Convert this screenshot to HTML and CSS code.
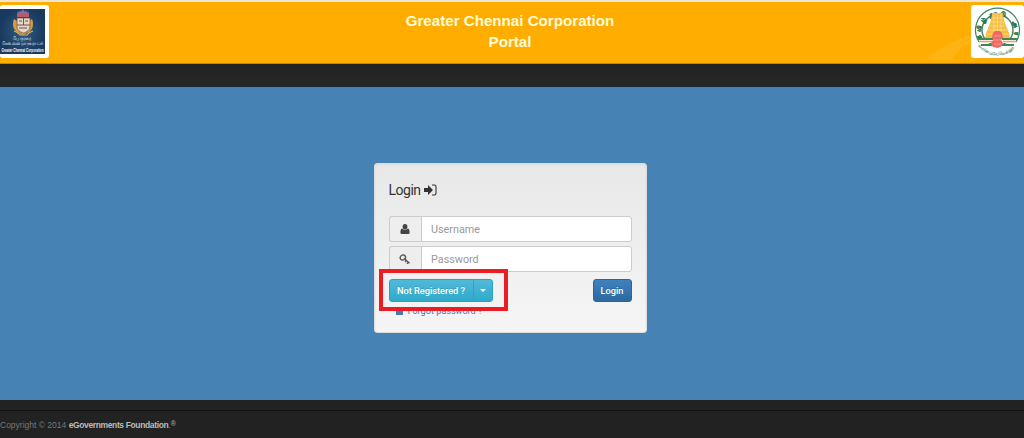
FILE: index.html
```html
<!DOCTYPE html>
<html lang="en">
<head>
  <meta charset="UTF-8" />
  <meta name="viewport" content="width=device-width, initial-scale=1.0"/>
  <title>Greater Chennai Corporation Portal</title>
  <link rel="stylesheet" href="styles.css">
</head>
<body>
  <header class="header">
    <div class="logo logo-left">
      <svg width="45" height="45" viewBox="0 0 45 45">
        <defs>
          <radialGradient id="navy"><stop offset="0" stop-color="#315c82"/><stop offset="1" stop-color="#193a5e"/></radialGradient>
        </defs>
        <rect width="45" height="45" fill="url(#navy)"/>
        <path d="M17 5l1-3 1 2 1-3 1 2 2-3 2 3 1-2 1 3 1-2 1 3z" fill="#8d6ba5"/>
        <path d="M17 5h12v3H17z" fill="#b55b67"/>
        <path d="M14 10c-2 5-1 10 3 13l6 3 6-3c4-3 5-8 3-13l-3 2H17z" fill="#d79c43"/>
        <path d="M17 9h13v8c0 4-3 6-6.500 7-4-1-6.500-3-6.500-7z" fill="#e5d6ca" stroke="#6e4f43" stroke-width=".7"/>
        <path d="M17 16h13M23.500 9v7M19 12h3M25 12h3M19 19h8" stroke="#76534d" stroke-width="1"/>
        <path d="M14 22q4 1 6 4h7q2-3 6-4" fill="none" stroke="#e3b34f" stroke-width="1.200"/>
        <text x="22" y="30.500" class="logo-tamil" textLength="18" lengthAdjust="spacingAndGlyphs">பெருநகர</text>
        <text x="22.500" y="35.500" class="logo-tamil" textLength="42" lengthAdjust="spacingAndGlyphs">சென்னை மாநகராட்சி</text>
        <text x="22.500" y="42.500" class="logo-name" textLength="42" lengthAdjust="spacingAndGlyphs">Greater Chennai Corporation</text>
      </svg>
    </div>
    <h1 class="title">Greater Chennai Corporation<br>Portal</h1>
    <svg class="swirl" width="80" height="40" viewBox="0 0 80 40">
      <path d="M2 36Q34 10 76 5Q30 18 15 35Q35 15 70 12Q34 21 28 38z" fill="#ffc13b"/>
    </svg>
    <div class="logo logo-right">
      <svg width="47" height="49" viewBox="0 0 47 49">
        <defs>
          <path id="ring-top" d="M7 31A17.500 17.500 0 1 1 40 31"/>
          <path id="ring-bottom" d="M2 35Q11 47 23.500 47T45 35"/>
        </defs>
        <path d="M5 34A22 22 0 1 1 42 34" fill="none" stroke="#3d855a" stroke-width="1.200"/>
        <ellipse cx="23.500" cy="22" rx="15.500" ry="15.200" fill="#fff" stroke="#3d855a" stroke-width="1.400"/>
        <text class="ring-text"><textPath href="#ring-top" textLength="71">தமிழ்நாடு அரசு</textPath></text>
        <path d="M18 5h11l1 7 2 6 3 7 1 6H11l1-6 3-7 2-6z" fill="#f6bd42"/>
        <path d="M18 10h11M17 14h13M16 18h15M14 22h19M13 26h21M20 6v23M23.500 6v23M27 6v23" stroke="#fae39b" stroke-width=".7"/>
        <path d="M5 31h14v4H5zM28 31h14v4H28z" fill="#fff"/>
        <path d="M4 30h15v2H4zM28 30h15v2H28zM7 36h12v2H7zM28 36h12v2H28z" fill="#3b895a"/>
        <path d="M5 33.500h13M29 33.500h13" stroke="#f39a55" stroke-width="1.500"/>
        <path d="M18 29l1-4 2-2h5l2 2 1 4-2 3 2 3-1 3-4 2-5-1-2-4 2-3z" fill="#ed6b62"/>
        <path d="M20 28h7M19 32h9M20 36h7" stroke="#f8a394" stroke-width=".8"/>
        <text class="motto"><textPath href="#ring-bottom" startOffset="4">வாய்மையே வெல்லும்</textPath></text>
      </svg>
    </div>
  </header>
  <div class="navbar"></div>

  <main class="content">
    <form class="login-panel">
      <h2 class="login-title">Login
        <svg width="13" height="12" viewBox="0 0 13 12">
          <path d="M0 4h4V1l5 5-5 5V8H0z" fill="#333"/>
          <path d="M8 1h2.500Q12 1 12 2.500v7Q12 11 10.500 11H8" fill="none" stroke="#333" stroke-width="1.100"/>
        </svg>
      </h2>
      <div class="input-group">
        <span class="addon">
          <svg width="10" height="10" viewBox="0 0 10 10" fill="#444"><ellipse cx="5" cy="2.700" rx="2.400" ry="2.700"/><path d="M2 4.500Q5 7 8 4.500Q9.600 5 9.600 8.500Q9.600 10 8.500 10h-7Q.4 10 .4 8.500Q.4 5 2 4.500z"/></svg>
        </span>
        <input class="field" type="text" placeholder="Username">
      </div>
      <div class="input-group">
        <span class="addon">
          <svg width="12" height="11" viewBox="0 0 12 11" fill="none" stroke="#555" stroke-width="1.400"><ellipse cx="3.800" cy="3.500" rx="2.800" ry="2.400" transform="rotate(-35 3.800 3.500)"/><path d="M5.500 4.800l5 4.500M7.300 6.500L6 8M9.300 8L8 9.800"/></svg>
        </span>
        <input class="field" type="password" placeholder="Password">
      </div>
      <div class="actions">
        <div class="btn-group">
          <button type="button" class="btn btn-info">Not Registered ?</button>
          <button type="button" class="btn btn-info btn-toggle" aria-label="More"><span class="caret"></span></button>
          <span class="highlight"></span>
        </div>
        <button type="button" class="btn btn-primary">Login</button>
      </div>
      <a class="forgot" href="#">
        <svg width="7" height="8" viewBox="0 0 7 8"><path d="M1.500 4V2.500a2 2 0 0 1 4 0V4" fill="none" stroke="#4579bd"/><path d="M0 3.500h7V8H0z" fill="#4579bd"/></svg>
        <span>Forgot password ?</span>
      </a>
    </form>
  </main>

  <footer class="footer">
    <div class="copyright">Copyright © 2014 <b>eGovernments Foundation</b>.<sup>®</sup></div>
  </footer>
</body>
</html>
```
FILE: styles.css
```css
* {
  box-sizing: border-box;
}
body {
  margin: 0;
  height: 438px;
  overflow: hidden;
  background-color: #222;
  font-family: "Liberation Sans", Arial, sans-serif;
}
.header {
  position: relative;
  display: flex;
  justify-content: space-between;
  height: 64px;
  padding-top: 4px;
  background-color: #ffad00;
  border-top: 2px solid #eee5d2;
  border-bottom: 1px solid #bd8410;
}
.logo {
  height: 53px;
  background-color: #fff;
  border-radius: 3px;
}
.logo svg {
  display: block;
  overflow: visible;
}
.logo-left {
  width: 49px;
  padding: 4px 4px 4px 0;
  margin-top: -1px;
}
.logo-right {
  width: 53px;
  margin-top: -1px;
  padding: 3px;
  z-index: 1;
}
.logo-tamil {
  font-size: 5px;
  fill: #f0f6fa;
  text-anchor: middle;
}
.logo-name {
  font-size: 4.5px;
  font-weight: bold;
  fill: #fff;
  text-anchor: middle;
}
.ring-text {
  font-size: 6px;
  font-weight: bold;
  letter-spacing: 1.5px;
  fill: #2b7449;
  stroke: #2b7449;
  stroke-width: 0.4px;
}
.motto {
  font-size: 4px;
  font-weight: bold;
  fill: #4d8b66;
}
.swirl {
  position: absolute;
  right: 20px;
  bottom: 0;
  opacity: 0.35;
}
.title {
  margin: 4px 0 0;
  color: #fffbd8;
  font-size: 15.15px;
  line-height: 21px;
  text-align: center;
}
.navbar {
  height: 23px;
  background: linear-gradient(#222, #282828);
  border-bottom: 1px solid #1b2730;
}
.content {
  height: 313px;
  padding-top: 76px;
  background-color: #4682b4;
}
.login-panel {
  width: 273px;
  height: 170px;
  margin-left: 373.5px;
  padding: 16px 15px 0;
  background: linear-gradient(#e8e8e8, #f5f5f5);
  border: 1px solid #dcdcdc;
  border-radius: 3px;
  box-shadow: inset 0 1px 3px rgba(0, 0, 0, 0.05);
}
.login-title {
  display: flex;
  align-items: center;
  gap: 3px;
  height: 20px;
  margin: 0 0 16px -1px;
  color: #333;
  font-family: Roboto, sans-serif;
  font-size: 14px;
  font-weight: 400;
  letter-spacing: -0.5px;
}
.input-group {
  display: flex;
  width: 243px;
  height: 26px;
  margin: 0 0 4px -1px;
}
.input-group + .input-group {
  margin-bottom: 7px;
}
.addon {
  display: flex;
  align-items: center;
  justify-content: center;
  width: 32.5px;
  background-color: #eee;
  border: 1px solid #ccc;
  border-right: 0;
  border-radius: 3px 0 0 3px;
}
.field {
  flex: 1;
  min-width: 0;
  padding: 0 9px;
  background-color: #fff;
  border: 1px solid #ccc;
  border-radius: 0 3px 3px 0;
  font-family: Roboto, sans-serif;
  font-size: 10.8px;
}
.field::placeholder {
  color: #999;
}
.actions {
  display: flex;
  justify-content: space-between;
  width: 243px;
  margin-left: -1px;
}
.btn-group {
  position: relative;
  display: flex;
}
.btn {
  height: 23px;
  padding: 0 8px;
  color: #fff;
  border: 1px solid #28a4c9;
  border-radius: 3px;
  font-family: Roboto, sans-serif;
  font-size: 9.2px;
  font-weight: 500;
  text-shadow: 0 -1px 0 rgba(0, 0, 0, 0.15);
  white-space: nowrap;
}
.btn-info {
  width: 85px;
  padding: 0;
  background: linear-gradient(#51b9d8, #2faacb);
  border-radius: 3px 0 0 3px;
}
.btn-toggle {
  display: flex;
  align-items: center;
  justify-content: center;
  width: 20px;
  margin-left: -1px;
  border-radius: 0 3px 3px 0;
}
.btn-primary {
  width: 39px;
  padding: 0;
  background: linear-gradient(#4082bd, #2c68a1);
  border-color: #2b669a;
}
.caret {
  border-top: 3px solid #fff;
  border-left: 3px solid transparent;
  border-right: 3px solid transparent;
}
/* red frame round the registration button */
.highlight {
  position: absolute;
  top: -10px;
  left: -10px;
  width: 129px;
  height: 42px;
  border: 4px solid #ec1c24;
}
.forgot {
  display: flex;
  align-items: center;
  gap: 5px;
  width: 100px;
  height: 12px;
  margin: 3px 0 0 6px;
  color: #4579bd;
  font-family: Roboto, sans-serif;
  font-size: 9.1px;
  line-height: 12px;
  text-decoration: none;
  white-space: nowrap;
}
.footer {
  height: 38px;
  padding-top: 10px;
  background-color: #222;
}
.copyright {
  height: 28px;
  padding-top: 9px;
  border-top: 1px solid #111;
  color: #777;
  font-size: 8.5px;
  line-height: 11px;
}
.copyright b {
  color: #bbb;
  letter-spacing: -0.37px;
}
.copyright sup {
  color: #bbb;
  font-size: 7px;
  line-height: 0;
  vertical-align: 2px;
}
```
